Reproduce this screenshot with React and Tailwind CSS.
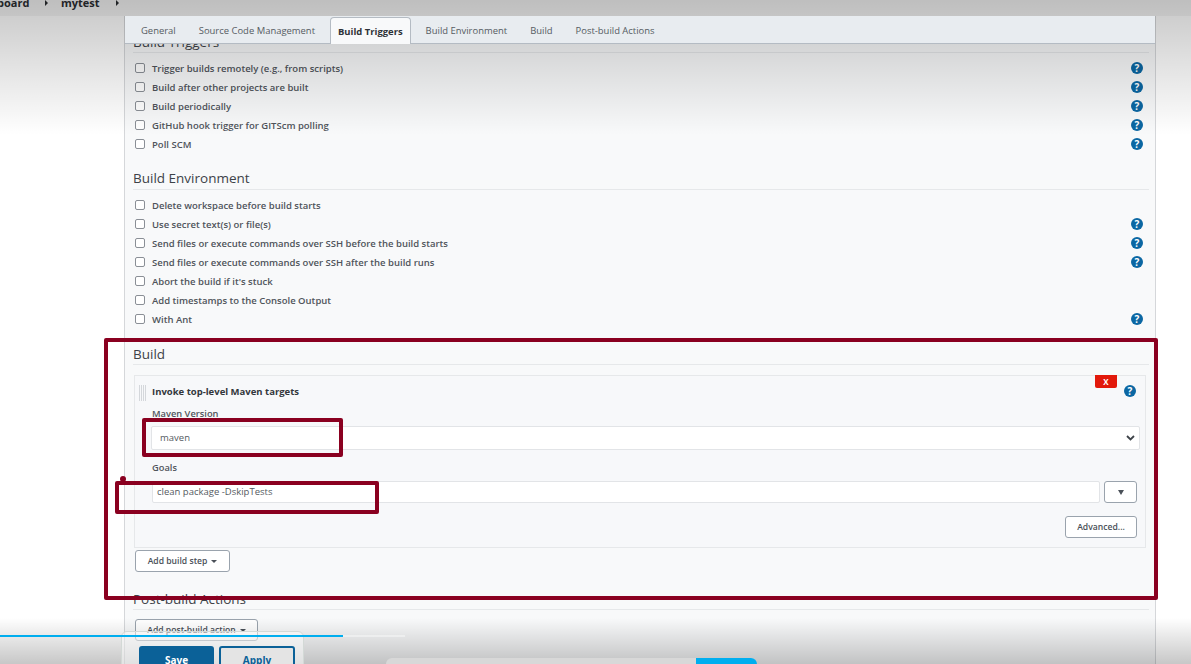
import React from 'react';

const HelpIcon = () => (
  <span className="flex h-[12px] w-[12px] shrink-0 items-center justify-center rounded-full bg-[#0b67a3] text-[10px] font-bold leading-none text-white">?</span>
);

const CheckRow = ({ label, help }) => (
  <div className="flex h-[19px] items-center pl-[10px] pr-[12px]">
    <span className="h-[10px] w-[10px] shrink-0 -translate-y-px rounded-[2px] border border-[#8a8f96] bg-white"></span>
    <span className="ml-[7px] flex-1 translate-y-px text-[9.5px] font-semibold text-[#4f545a]">{label}</span>
    {help && <span className="-translate-y-px"><HelpIcon /></span>}
  </div>
);

const triggerRows = [
  ['Trigger builds remotely (e.g., from scripts)', true],
  ['Build after other projects are built', true],
  ['Build periodically', true],
  ['GitHub hook trigger for GITScm polling', true],
  ['Poll SCM', true],
];

const environmentRows = [
  ['Delete workspace before build starts', false],
  ['Use secret text(s) or file(s)', true],
  ['Send files or execute commands over SSH before the build starts', true],
  ['Send files or execute commands over SSH after the build runs', true],
  ["Abort the build if it's stuck", false],
  ['Add timestamps to the Console Output', false],
  ['With Ant', true],
];

const tabs = ['General', 'Source Code Management', 'Build Triggers', 'Build Environment', 'Build', 'Post-build Actions'];

const SectionTitle = ({ children, className }) => (
  <div className={`ml-[8px] mr-[6px] border-b border-[#e6e8ea] text-[13.5px] font-medium leading-[20px] text-[#3d4248] ${className}`}>{children}</div>
);

const OutlineButton = ({ children, className }) => (
  <div className={`flex h-[22px] items-center justify-center rounded-[3px] border border-[#9aa3ad] bg-white text-[8.6px] font-semibold text-[#4a5058] ${className}`}>{children}</div>
);

const Caret = () => <span className="ml-[4px] h-0 w-0 border-x-[3px] border-t-[3px] border-x-transparent border-t-[#4a5058]"></span>;

export default function App() {
  return (
    <div className="relative h-[664px] w-[1191px] overflow-hidden bg-white font-['Open_Sans','Noto_Sans',sans-serif]">
      {/* breadcrumb */}
      <div className="flex h-[16px] items-center bg-[#f4f4f4] text-[11px] font-bold text-[#2a2d31]">
        <div className="flex -translate-y-[5px] items-center">
          <span className="-ml-[3px] w-[50px]">board</span>
          <span className="h-0 w-0 -translate-x-[2px] border-y-[3px] border-l-[3px] border-y-transparent border-l-[#2a2d31]"></span>
          <span className="ml-[11px]">mytest</span>
          <span className="ml-[16px] h-0 w-0 border-y-[3px] border-l-[3px] border-y-transparent border-l-[#2a2d31]"></span>
        </div>
      </div>

      <div className="ml-[124px] h-[648px] w-[1032px] overflow-hidden border-x border-[#d5d7da] bg-[#f8f9fa]">
        {/* tab bar */}
        <div className="relative z-10 flex h-[28px] items-end gap-[23px] border-b border-[#b4bbc3] bg-[#e8ecf0] pl-[16px] text-[9.45px] text-[#555b62]">
          {tabs.map((tab) => (
            tab === 'Build Triggers' ? (
              <span key={tab} className="-mx-[8px] -mb-px flex h-[27px] items-center rounded-t-[4px] border border-b-0 border-[#b4bbc3] bg-[#f8f9fa] px-[7px] pt-[3px] font-bold text-[#2f3338]">{tab}</span>
            ) : (
              <span key={tab} className="flex h-[27px] items-center pt-[3px]">{tab}</span>
            )
          ))}
        </div>

        <div className="-mt-[12px]">
          <SectionTitle className="pb-[0px]">Build Triggers</SectionTitle>
          <div className="mt-[6px]">
            {triggerRows.map(([label, help]) => <CheckRow key={label} label={label} help={help} />)}
          </div>

          <SectionTitle className="mt-[14px] pb-[1px]">Build Environment</SectionTitle>
          <div className="mt-[6px]">
            {environmentRows.map(([label, help]) => <CheckRow key={label} label={label} help={help} />)}
          </div>

          <SectionTitle className="mt-[15px] pb-[0px]">Build</SectionTitle>

          {/* build step card */}
          <div className="ml-[9px] mr-[9px] mt-[10px] h-[173px] border border-[#e6e8ea] bg-[#f7f8fa]">
            <div className="flex h-[31px] items-start">
              <span className="ml-[4px] mt-[9px] h-[16px] w-[8px] bg-[repeating-linear-gradient(90deg,#d4d7db_0,#d4d7db_1px,transparent_1px,transparent_2px)]"></span>
              <span className="ml-[5px] mt-[9px] flex-1 text-[9.5px] font-bold leading-[14px] text-[#33373c]">Invoke top-level Maven targets</span>
              <span className="mt-[-1px] flex h-[13px] w-[22px] items-center justify-center rounded-b-[2px] bg-[#e2190b] text-[8px] font-bold leading-none text-white">X</span>
              <span className="ml-[7px] mr-[9px] mt-[9px]"><HelpIcon /></span>
            </div>
            <div className="ml-[17px] text-[9.3px] font-semibold leading-[14px] text-[#4f545a]">Maven Version</div>
            <div className="ml-[16px] mr-[5px] mt-[5px] flex h-[24px] items-center justify-between rounded-[2px] border border-[#e2e4e7] bg-white pl-[8px] pr-[4px] text-[9.5px] text-[#555b62]">
              <span>maven</span>
              <svg width="9" height="6" viewBox="0 0 9 6" fill="none" stroke="#3e4349" strokeWidth="1.8"><path d="M1 1l3.5 3.5L8 1" /></svg>
            </div>
            <div className="ml-[17px] mt-[11px] text-[9.3px] font-semibold leading-[14px] text-[#4f545a]">Goals</div>
            <div className="ml-[17px] mr-[8px] mt-[6px] flex gap-[4px]">
              <div className="flex h-[22px] flex-1 items-center rounded-[2px] border border-[#e2e4e7] bg-white pl-[4px] text-[9.5px] text-[#555b62]">clean package -DskipTests</div>
              <OutlineButton className="w-[33px]">
                <span className="h-0 w-0 border-x-[3.5px] border-t-[5px] border-x-transparent border-t-[#4a5058]"></span>
              </OutlineButton>
            </div>
            <div className="mr-[8px] mt-[13px] flex justify-end">
              <OutlineButton className="w-[72px]">Advanced...</OutlineButton>
            </div>
          </div>

          <OutlineButton className="ml-[10px] mt-[2px] w-[95px]">Add build step<Caret /></OutlineButton>

          <SectionTitle className="mt-[17px] pb-[0px]">Post-build Actions</SectionTitle>
          <OutlineButton className="ml-[10px] mt-[9px] w-[123px]">Add post-build action<Caret /></OutlineButton>
        </div>
      </div>

      {/* video player shading */}
      <div className="pointer-events-none absolute inset-x-0 top-0 h-[135px] bg-gradient-to-b from-[#00000038] to-transparent"></div>
      <div className="pointer-events-none absolute inset-x-0 bottom-0 h-[46px] bg-gradient-to-t from-[#00000038] to-transparent"></div>

      {/* sticky save bar */}
      <div className="absolute left-[121px] top-[631px] flex h-[40px] w-[183px] gap-[5px] rounded-[6px] border border-[#d3d9d6] bg-[#ffffff80] pl-[17px] pt-[14px]">
        <div className="flex h-[30px] w-[75px] items-start justify-center rounded-[3px] bg-[#0b6198] pt-[7px] text-[10px] font-bold text-white">Save</div>
        <div className="flex h-[30px] w-[76px] items-start justify-center rounded-[3px] border-2 border-[#0b6198] bg-[#e4e4e4] pt-[5px] text-[10px] font-bold text-[#0b6198]">Apply</div>
      </div>

      {/* annotation rectangles */}
      <div className="absolute left-[104px] top-[338px] h-[262px] w-[1054px] rounded-[2px] border-4 border-[#8a0020]"></div>
      <div className="absolute left-[142px] top-[418px] h-[39px] w-[201px] rounded-[2px] border-4 border-[#8a0020]"></div>
      <div className="absolute left-[115px] top-[481px] h-[33px] w-[264px] rounded-[2px] border-4 border-[#8a0020]"></div>
      <div className="absolute left-[120px] top-[476px] h-[6px] w-[6px] rounded-full bg-[#8a0020]"></div>

      {/* player progress */}
      <div className="absolute left-0 top-[635px] flex h-[2px] w-[405px] bg-[#ffffff66]">
        <div className="h-full w-[343px] bg-[#00aeef]"></div>
      </div>
      <div className="absolute left-[386px] top-[658px] flex h-[6px] w-[371px] justify-end overflow-hidden rounded-t-[6px] bg-[#d8d8d8]">
        <div className="h-full w-[61px] bg-[#00aeef]"></div>
      </div>
    </div>
  );
}
